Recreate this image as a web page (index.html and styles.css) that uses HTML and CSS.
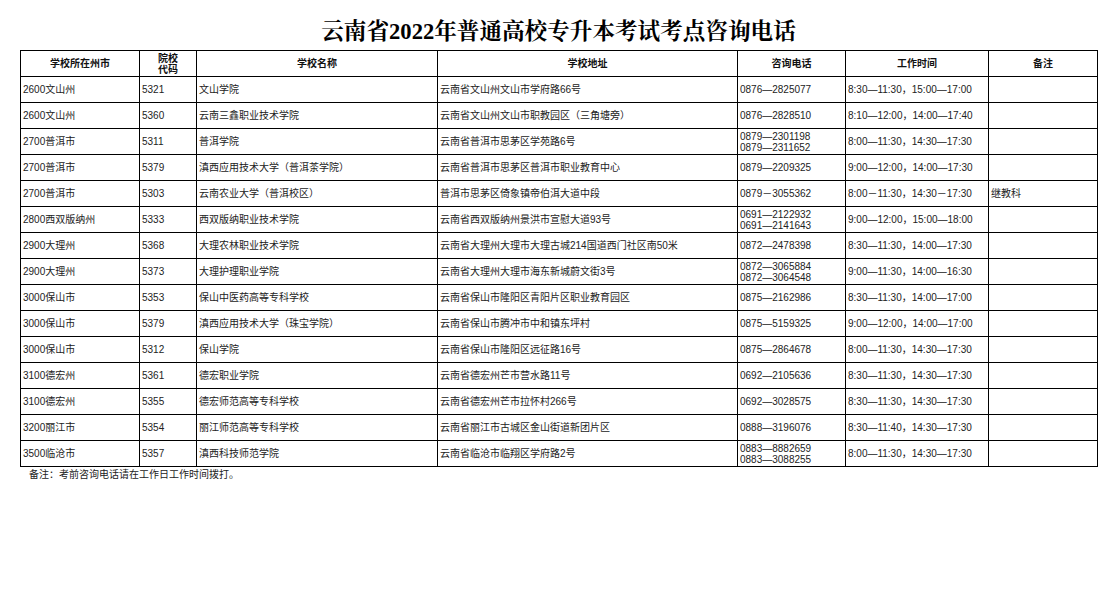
FILE: index.html
```html
<!DOCTYPE html>
<html lang="zh-CN">
<head>
<meta charset="utf-8">
<title>云南省2022年普通高校专升本考试考点咨询电话</title>
<link rel="stylesheet" href="styles.css">
</head>
<body>
<div class="page">
  <h1 class="title">云南省2022年普通高校专升本考试考点咨询电话</h1>
  <table class="grid">
    <colgroup>
      <col class="c1"><col class="c2"><col class="c3"><col class="c4"><col class="c5"><col class="c6"><col class="c7">
    </colgroup>
    <thead>
      <tr>
        <th>学校所在州市</th>
        <th>院校<br>代码</th>
        <th>学校名称</th>
        <th>学校地址</th>
        <th>咨询电话</th>
        <th>工作时间</th>
        <th>备注</th>
      </tr>
    </thead>
    <tbody>
      <tr><td>2600文山州</td><td>5321</td><td>文山学院</td><td>云南省文山州文山市学府路66号</td><td>0876—2825077</td><td>8:30—11:30，15:00—17:00</td><td></td></tr>
      <tr><td>2600文山州</td><td>5360</td><td>云南三鑫职业技术学院</td><td>云南省文山州文山市职教园区（三角塘旁）</td><td>0876—2828510</td><td>8:10—12:00，14:00—17:40</td><td></td></tr>
      <tr><td>2700普洱市</td><td>5311</td><td>普洱学院</td><td>云南省普洱市思茅区学苑路6号</td><td class="two">0879—2301198<br>0879—2311652</td><td>8:00—11:30，14:30—17:30</td><td></td></tr>
      <tr><td>2700普洱市</td><td>5379</td><td>滇西应用技术大学（普洱茶学院）</td><td>云南省普洱市思茅区普洱市职业教育中心</td><td>0879—2209325</td><td>9:00—12:00，14:00—17:30</td><td></td></tr>
      <tr><td>2700普洱市</td><td>5303</td><td>云南农业大学（普洱校区）</td><td>普洱市思茅区倚象镇帝伯洱大道中段</td><td>0879－3055362</td><td>8:00－11:30，14:30－17:30</td><td>继教科</td></tr>
      <tr><td>2800西双版纳州</td><td>5333</td><td>西双版纳职业技术学院</td><td>云南省西双版纳州景洪市宣慰大道93号</td><td class="two">0691—2122932<br>0691—2141643</td><td>9:00—12:00，15:00—18:00</td><td></td></tr>
      <tr><td>2900大理州</td><td>5368</td><td>大理农林职业技术学院</td><td>云南省大理州大理市大理古城214国道西门社区南50米</td><td>0872—2478398</td><td>8:30—11:30，14:00—17:30</td><td></td></tr>
      <tr><td>2900大理州</td><td>5373</td><td>大理护理职业学院</td><td>云南省大理州大理市海东新城蔚文街3号</td><td class="two">0872—3065884<br>0872—3064548</td><td>9:00—11:30，14:00—16:30</td><td></td></tr>
      <tr><td>3000保山市</td><td>5353</td><td>保山中医药高等专科学校</td><td>云南省保山市隆阳区青阳片区职业教育园区</td><td>0875—2162986</td><td>8:30—11:30，14:00—17:00</td><td></td></tr>
      <tr><td>3000保山市</td><td>5379</td><td>滇西应用技术大学（珠宝学院）</td><td>云南省保山市腾冲市中和镇东坪村</td><td>0875—5159325</td><td>9:00—12:00，14:00—17:00</td><td></td></tr>
      <tr><td>3000保山市</td><td>5312</td><td>保山学院</td><td>云南省保山市隆阳区远征路16号</td><td>0875—2864678</td><td>8:00—11:30，14:30—17:30</td><td></td></tr>
      <tr><td>3100德宏州</td><td>5361</td><td>德宏职业学院</td><td>云南省德宏州芒市营水路11号</td><td>0692—2105636</td><td>8:30—11:30，14:30—17:30</td><td></td></tr>
      <tr><td>3100德宏州</td><td>5355</td><td>德宏师范高等专科学校</td><td>云南省德宏州芒市拉怀村266号</td><td>0692—3028575</td><td>8:30—11:30，14:30—17:30</td><td></td></tr>
      <tr><td>3200丽江市</td><td>5354</td><td>丽江师范高等专科学校</td><td>云南省丽江市古城区金山街道新团片区</td><td>0888—3196076</td><td>8:30—11:40，14:30—17:30</td><td></td></tr>
      <tr><td>3500临沧市</td><td>5357</td><td>滇西科技师范学院</td><td>云南省临沧市临翔区学府路2号</td><td class="two">0883—8882659<br>0883—3088255</td><td>8:00—11:30，14:30—17:30</td><td></td></tr>
    </tbody>
  </table>
  <p class="note">备注：考前咨询电话请在工作日工作时间拨打。</p>
</div>
</body>
</html>
```

FILE: styles.css
```css
html, body {
  margin: 0;
  padding: 0;
  background: #fff;
}

body {
  font-family: "Liberation Sans", "Noto Sans CJK SC", sans-serif;
  color: #222;
}

.page {
  width: 1117px;
  padding: 0 0 0 20px;
  box-sizing: border-box;
}

.title {
  margin: 0;
  height: 50px;
  width: 1077px;
  box-sizing: border-box;
  padding-top: 18px;
  font-family: "Liberation Serif", "Noto Serif CJK SC", "Noto Sans CJK SC", serif;
  font-size: 22.6px;
  line-height: 28px;
  font-weight: bold;
  color: #000;
  text-align: center;
}

.grid {
  border-collapse: collapse;
  table-layout: fixed;
  width: 1078px;
  font-size: 10px;
  line-height: 11px;
}

.c1 { width: 119px; }
.c2 { width: 57px; }
.c3 { width: 241px; }
.c4 { width: 300px; }
.c5 { width: 108px; }
.c6 { width: 143px; }
.c7 { width: 109px; }

.grid th,
.grid td {
  border: 1px solid #000;
  height: 26px;
  padding: 0 0 0 2px;
  box-sizing: border-box;
  vertical-align: middle;
  white-space: nowrap;
  overflow: hidden;
}

.grid th {
  font-weight: bold;
  text-align: center;
  color: #111;
  padding: 0;
}

.grid td {
  text-align: left;
}

.note {
  margin: 0;
  padding: 1px 0 0 9px;
  font-size: 10px;
  line-height: 14px;
  color: #222;
}
```
